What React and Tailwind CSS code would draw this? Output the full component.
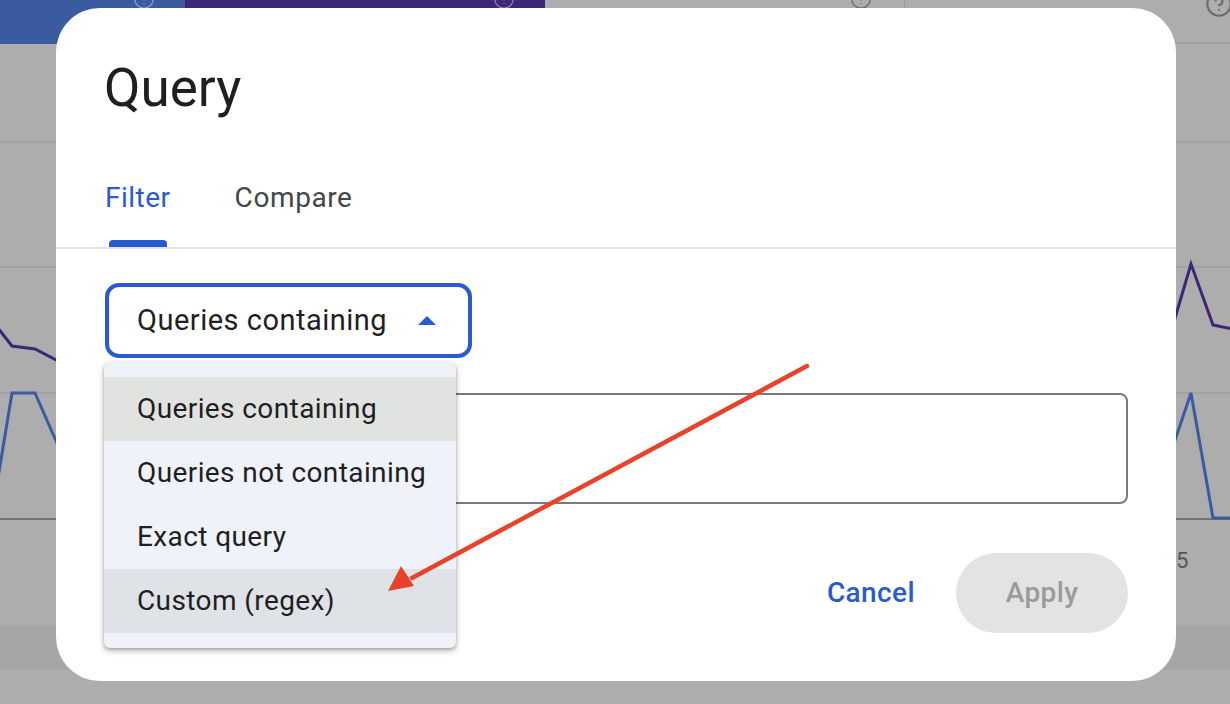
import React from 'react';
import { CircleHelp } from 'lucide-react';

const font = { fontFamily: 'Roboto, "Noto Sans", Arial, sans-serif' };

function TopBar() {
  return (
    <div className="flex h-[44px]">
      <div className="w-[185px] bg-[#3a5ba0] flex justify-end pr-[30px]">
        <CircleHelp className="w-[22px] h-[22px] -mt-[12px] text-[#8f9fc6]" strokeWidth={1.5} />
      </div>
      <div className="w-[360px] bg-[#3d2577] flex justify-end pr-[30px]">
        <CircleHelp className="w-[22px] h-[22px] -mt-[12px] text-[#8c7fb0]" strokeWidth={1.5} />
      </div>
      <div className="w-[360px] border-r border-[#9a9a9a] flex justify-end pr-[32px]">
        <CircleHelp className="w-[22px] h-[22px] -mt-[12px] text-[#6b6b6b]" strokeWidth={1.5} />
      </div>
      <div className="flex-1 border-b-2 border-[#a0a0a0] flex justify-end pr-[0px]">
        <CircleHelp className="w-[28px] h-[28px] -mt-[10px] -mr-[3px] text-[#6b6b6b]" strokeWidth={1.8} />
      </div>
    </div>
  );
}

function Chart() {
  return (
    <svg width="1230" height="660" viewBox="0 44 1230 660" className="block">
      {[142, 267, 393].map((y) => (
        <line key={y} x1="0" x2="1230" y1={y} y2={y} stroke="#a2a2a2" strokeWidth="2" />
      ))}
      <line x1="0" x2="1230" y1="519" y2="519" stroke="#737373" strokeWidth="2" />
      <rect x="0" y="625" width="1230" height="45" fill="#a6a6a7" />
      <polyline points="-10,318 12,346 35,349 60,362" fill="none" stroke="#3d2577" strokeWidth="3" />
      <polyline points="-4,490 12,393 35,393 60,450" fill="none" stroke="#3a5ba0" strokeWidth="3" />
      <polyline points="1170,335 1191,264 1213,325 1232,329" fill="none" stroke="#3d2577" strokeWidth="3" />
      <polyline points="1170,455 1191,393 1213,518 1232,518" fill="none" stroke="#3a5ba0" strokeWidth="3" />
      <text x="1176" y="568" fontSize="22" fill="#555" fontFamily="Roboto, Arial, sans-serif">5</text>
    </svg>
  );
}

function Dropdown() {
  const items = ['Queries containing', 'Queries not containing', 'Exact query', 'Custom (regex)'];
  const bg = ['bg-[#e1e3e1]', '', '', 'bg-[#dfe2e7]'];
  return (
    <div className="absolute left-[48px] top-[354px] w-[352px] py-[15px] rounded-[6px] bg-[#eff2f8] shadow-[0_3px_6px_rgba(0,0,0,0.28),0_1px_3px_rgba(0,0,0,0.2)]">
      {items.map((t, i) => (
        <div key={t} className={`h-[64px] flex items-center pl-[33px] text-[28px] tracking-[0.4px] text-[#1f1f1f] ${bg[i]}`}>
          {t}
        </div>
      ))}
    </div>
  );
}

function Dialog() {
  return (
    <div
      className="absolute left-[56px] top-[8px] w-[1120px] h-[673px] bg-white rounded-[44px] flex flex-col"
      style={font}
    >
      <h2 className="pl-[48px] pt-[50px] h-[116px] text-[53px] leading-[60px] text-[#1f1f1f]">Query</h2>

      <div className="flex pl-[49px] mt-[56px] gap-[64px]">
        <div className="flex flex-col items-center">
          <span className="text-[28px] leading-[36px] tracking-[0.5px] text-[#2a5ad2]">Filter</span>
          <div className="mt-[24px] w-[58px] h-[7px] rounded-t-[4px] bg-[#2a5ad2]" />
        </div>
        <div className="flex flex-col items-center">
          <span className="text-[28px] leading-[36px] tracking-[0.6px] text-[#444746]">Compare</span>
          <div className="mt-[24px] h-[7px]" />
        </div>
      </div>
      <div className="h-[2px] bg-[#e3e3e3]" />

      <div className="pl-[49px] pr-[48px] pt-[34px] flex flex-col">
        <div className="w-[367px] h-[75px] border-4 border-[#2a5ad2] rounded-[14px] flex items-center justify-between pl-[28px] pr-[32px]">
          <span className="text-[29px] tracking-[0.5px] text-[#1f1f1f]">Queries containing</span>
          <svg width="18" height="9" viewBox="0 0 18 9">
            <path d="M0 9 L9 0 L18 9 Z" fill="#2a5ad2" />
          </svg>
        </div>
        <div className="mt-[35px] h-[111px] border-2 border-[#7a7a7a] rounded-[8px]" />
        <div className="mt-[49px] flex justify-end items-center gap-[41px]">
          <button className="text-[28px] tracking-[0.4px] text-[#2a5ad2] font-medium">Cancel</button>
          <button className="w-[172px] h-[80px] rounded-full bg-[#e3e3e3] text-[28px] tracking-[0.4px] text-[#9b9b9b] font-medium">
            Apply
          </button>
        </div>
      </div>

      <Dropdown />
    </div>
  );
}

export default function App() {
  return (
    <div className="relative w-[1230px] h-[704px] overflow-hidden bg-[#adadad]">
      <TopBar />
      <Chart />
      <Dialog />
      <svg className="absolute inset-0 pointer-events-none" width="1230" height="704">
        <line x1="807" y1="366" x2="412" y2="578" stroke="#e8432a" strokeWidth="4.5" strokeLinecap="round" />
        <path d="M388 591 L401 566 L414 586 Z" fill="#e8432a" />
      </svg>
    </div>
  );
}
